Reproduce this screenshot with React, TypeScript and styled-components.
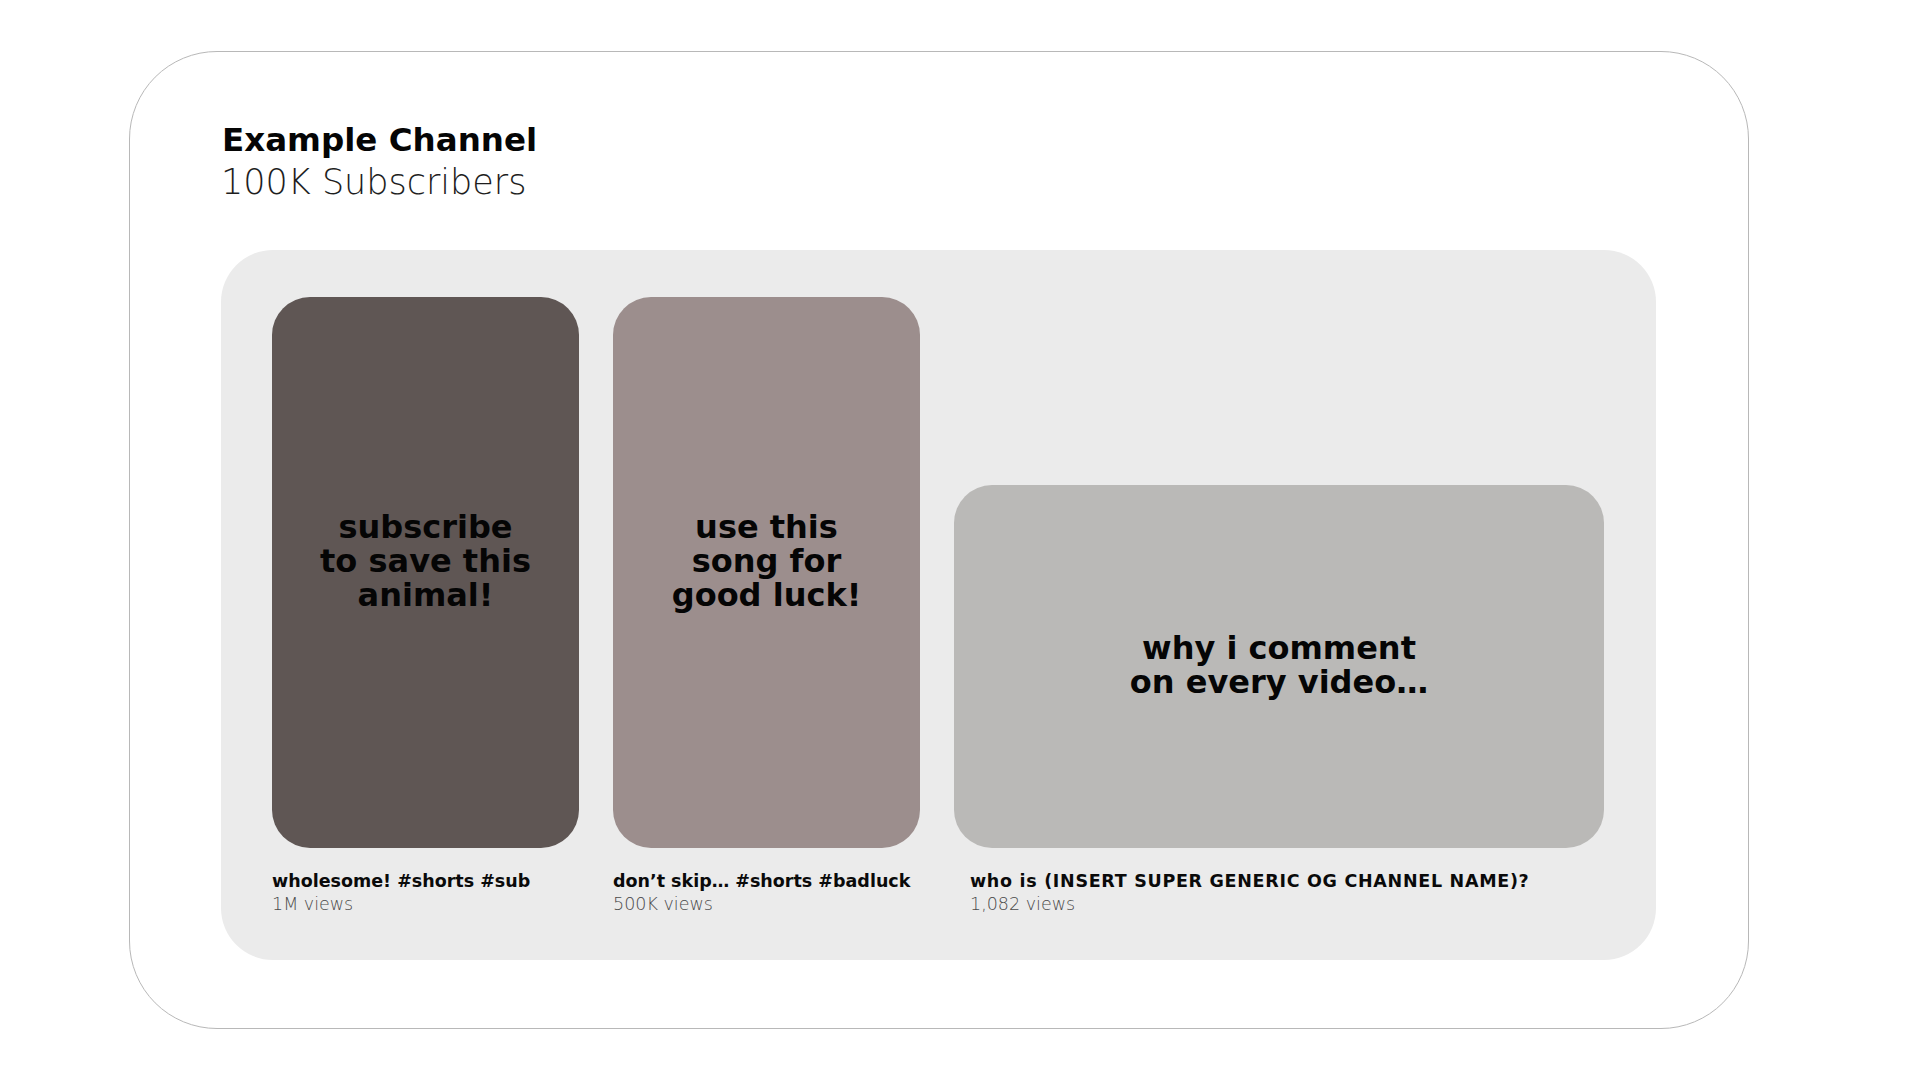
import React from "react";
import styled, { createGlobalStyle } from "styled-components";

const GlobalStyle = createGlobalStyle`
  html, body {
    margin: 0;
    padding: 0;
    background: #ffffff;
  }
  body {
    font-family: "DejaVu Sans", "Liberation Sans", sans-serif;
    color: #000;
  }
`;

const Page = styled.div`
  width: 1920px;
  height: 1080px;
  box-sizing: border-box;
  padding: 51px 0 0 129px;
  background: #fff;
`;

const ChannelCard = styled.section`
  width: 1620px;
  height: 978px;
  box-sizing: border-box;
  border: 1px solid #b8b8b8;
  border-radius: 88px;
  padding: 69px 92px 0 91px;
  display: flex;
  flex-direction: column;
`;

const ChannelName = styled.h1`
  margin: 0;
  font-size: 32.5px;
  line-height: 38px;
  font-weight: 700;
  color: #050505;
  padding-left: 1px;
`;

const Subscribers = styled.div`
  margin-top: 3px;
  font-size: 35px;
  line-height: 40px;
  font-weight: 200;
  color: #1e1e1e;
`;

const Shelf = styled.div`
  margin-top: 48px;
  height: 710px;
  box-sizing: border-box;
  background: #ebebeb;
  border-radius: 52px;
  padding: 47px 52px 0 51px;
  display: flex;
  align-items: flex-start;
  gap: 34px;
`;

const VideoItem = styled.div<{ $w: number }>`
  width: ${(p) => p.$w}px;
  flex: none;
  display: flex;
  flex-direction: column;
  height: 100%;
`;

const ThumbSlot = styled.div`
  height: 551px;
  display: flex;
  align-items: flex-end;
`;

const Thumb = styled.div<{ $bg: string; $h: number }>`
  width: 100%;
  height: ${(p) => p.$h}px;
  background: ${(p) => p.$bg};
  border-radius: 38px;
  display: flex;
  align-items: center;
  justify-content: center;
  text-align: center;
`;

const ThumbText = styled.p<{ $dy: number }>`
  margin: 0;
  font-size: 32px;
  line-height: 34px;
  font-weight: 700;
  color: #050505;
  transform: translateY(${(p) => p.$dy}px);
`;

const Meta = styled.div<{ $indent: number }>`
  margin-top: 22px;
  padding-left: ${(p) => p.$indent}px;
`;

const VideoTitle = styled.div<{ $track: number }>`
  font-size: 17.5px;
  line-height: 23px;
  font-weight: 700;
  letter-spacing: ${(p) => p.$track}px;
  color: #0a0a0a;
  white-space: nowrap;
`;

const Views = styled.div`
  font-size: 17.5px;
  line-height: 23px;
  font-weight: 200;
  color: #4a4a4a;
`;

type Video = {
  lines: string[];
  title: string;
  views: string;
  color: string;
  width: number;
  height: number;
  indent: number;
  dy: number;
  track: number;
};

const videos: Video[] = [
  {
    lines: ["subscribe", "to save this", "animal!"],
    title: "wholesome! #shorts #sub",
    views: "1M views",
    color: "#5f5654",
    width: 307,
    height: 551,
    indent: 0,
    dy: -12,
    track: 0,
  },
  {
    lines: ["use this", "song for", "good luck!"],
    title: "don’t skip… #shorts #badluck",
    views: "500K views",
    color: "#9c8e8d",
    width: 307,
    height: 551,
    indent: 0,
    dy: -12,
    track: 0,
  },
  {
    lines: ["why i comment", "on every video…"],
    title: "who is (INSERT SUPER GENERIC OG CHANNEL NAME)?",
    views: "1,082 views",
    color: "#bab9b7",
    width: 650,
    height: 363,
    indent: 16,
    dy: -2,
    track: 0.7,
  },
];

export default function App() {
  return (
    <>
      <GlobalStyle />
      <Page>
        <ChannelCard>
          <ChannelName>Example Channel</ChannelName>
          <Subscribers>100K Subscribers</Subscribers>
          <Shelf>
            {videos.map((v) => (
              <VideoItem key={v.title} $w={v.width}>
                <ThumbSlot>
                  <Thumb $bg={v.color} $h={v.height}>
                    <ThumbText $dy={v.dy}>
                      {v.lines.map((l, i) => (
                        <React.Fragment key={l}>
                          {i > 0 && <br />}
                          {l}
                        </React.Fragment>
                      ))}
                    </ThumbText>
                  </Thumb>
                </ThumbSlot>
                <Meta $indent={v.indent}>
                  <VideoTitle $track={v.track}>{v.title}</VideoTitle>
                  <Views>{v.views}</Views>
                </Meta>
              </VideoItem>
            ))}
          </Shelf>
        </ChannelCard>
      </Page>
    </>
  );
}
